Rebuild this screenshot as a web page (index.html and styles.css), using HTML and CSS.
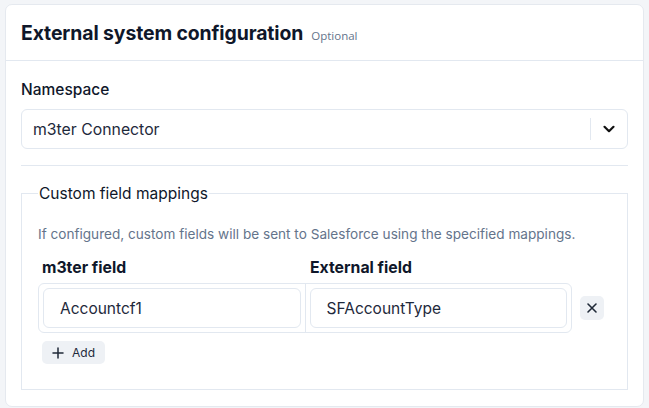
FILE: index.html
```html
<!DOCTYPE html>
<html>
<head>
<meta charset="utf-8">
<link rel="stylesheet" href="styles.css">
</head>
<body>
<div class="card">
  <div class="card-header">
    <h2 class="title">External system configuration</h2>
    <span class="optional">Optional</span>
  </div>
  <div class="card-body">
    <div class="label">Namespace</div>
    <div class="select">
      <span class="select-value">m3ter Connector</span>
      <span class="select-sep"></span>
      <span class="select-arrow">
        <svg width="14" height="14" viewBox="0 0 14 14"><path d="M2.5 4.8 L7 9.2 L11.5 4.8" fill="none" stroke="#111" stroke-width="2.2" stroke-linecap="round" stroke-linejoin="round"/></svg>
      </span>
    </div>
    <div class="divider"></div>
    <fieldset class="mappings">
      <legend>Custom field mappings</legend>
      <p class="desc">If configured, custom fields will be sent to Salesforce using the specified mappings.</p>
      <div class="cols">
        <div class="col-head">m3ter field</div>
        <div class="col-head">External field</div>
      </div>
      <div class="row-line">
        <div class="row-box">
          <div class="input">Accountcf1</div>
          <div class="row-sep"></div>
          <div class="input">SFAccountType</div>
        </div>
        <button class="remove">
          <svg width="12" height="12" viewBox="0 0 12 12"><path d="M2 2 L10 10 M10 2 L2 10" stroke="#1f2937" stroke-width="1.6" stroke-linecap="round"/></svg>
        </button>
      </div>
      <button class="add">
        <svg width="12" height="12" viewBox="0 0 12 12"><path d="M6 1 V11 M1 6 H11" stroke="#1f2937" stroke-width="1.5" stroke-linecap="round"/></svg>
        <span>Add</span>
      </button>
    </fieldset>
  </div>
</div>
</body>
</html>
```
FILE: styles.css
```css
* { box-sizing: border-box; }
html, body { margin: 0; padding: 0; }
body {
  background: #f3f5f8;
  font-family: "Inter", "DejaVu Sans", sans-serif;
  color: #0f172a;
  padding: 4px 5px;
  height: 408px;
  overflow: hidden;
}
.card {
  background: #fff;
  border: 1px solid #e5e9ef;
  border-radius: 7px;
  height: 403px;
}
.card-header {
  display: flex;
  align-items: baseline;
  gap: 8px;
  padding: 16px 15px 0;
  height: 56px;
  border-bottom: 1px solid #e2e8f0;
}
.title {
  margin: 0;
  font-size: 19.4px;
  font-weight: 700;
  letter-spacing: -0.1px;
  color: #0f172a;
}
.optional {
  font-size: 11.5px;
  color: #64748b;
  font-family: "Open Sans", sans-serif;
}
.card-body {
  padding: 19px 15px 0;
}
.label {
  font-size: 15.5px;
  font-weight: 500;
  line-height: 20px;
  margin-bottom: 9px;
}
.select {
  height: 40px;
  border: 1px solid #e2e8f0;
  border-radius: 6px;
  display: flex;
  align-items: center;
  padding-left: 11px;
}
.select-value {
  flex: 1;
  font-size: 15.8px;
  color: #1e293b;
}
.select-sep {
  width: 1px;
  height: 22px;
  background: #e2e8f0;
}
.select-arrow {
  width: 36px;
  display: flex;
  justify-content: center;
  align-items: center;
}
.divider {
  height: 1px;
  background: #e2e8f0;
  margin: 16px 0 0;
}
.mappings {
  margin: 18px 0 0;
  border: 1px solid #e2e8f0;
  padding: 0 16px 24px;
  height: 206px;
}
.mappings legend {
  font-size: 15.5px;
  padding: 0 1px;
  margin-left: 0;
  color: #0f172a;
}
.desc {
  margin: 22px 0 0;
  font-size: 13.6px;
  color: #64748b;
  line-height: 18px;
}
.cols {
  display: grid;
  grid-template-columns: 268px 268px;
  margin-top: 15px;
  padding-left: 4px;
}
.col-head {
  font-size: 15.8px;
  font-weight: 700;
  line-height: 20px;
}
.row-line {
  display: flex;
  align-items: center;
  gap: 8px;
  margin-top: 5px;
}
.row-box {
  display: flex;
  align-items: center;
  width: 534px;
  height: 50px;
  border: 1px solid #e2e8f0;
  border-radius: 6px;
  padding: 0 4px;
}
.input {
  flex: 1;
  height: 40px;
  border: 1px solid #e2e8f0;
  border-radius: 6px;
  display: flex;
  align-items: center;
  padding-left: 16px;
  font-size: 15.5px;
  color: #1e293b;
}
.row-sep {
  width: 1px;
  height: 48px;
  background: #e2e8f0;
  margin: 0 4px;
}
.remove {
  width: 24px;
  height: 24px;
  border: 0;
  border-radius: 5px;
  background: #eef1f5;
  display: flex;
  align-items: center;
  justify-content: center;
  padding: 0;
}
.add {
  margin: 8px 0 0 4px;
  height: 23px;
  border: 0;
  border-radius: 5px;
  background: #eef1f5;
  display: flex;
  align-items: center;
  gap: 8px;
  padding: 0 10px;
  font-family: "Inter", sans-serif;
  font-size: 12px;
  color: #1e293b;
}
```
